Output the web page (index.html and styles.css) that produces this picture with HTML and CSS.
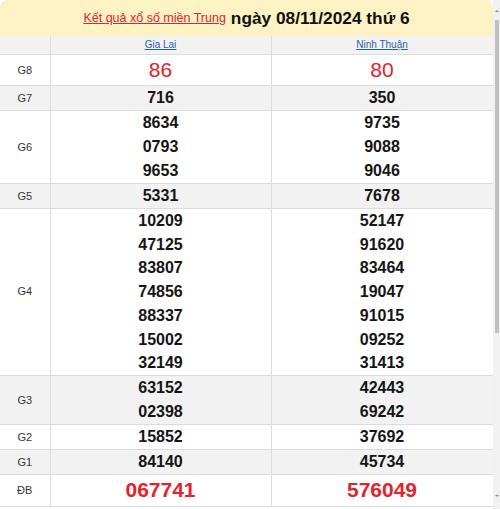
FILE: index.html
```html
<!DOCTYPE html>
<html lang="vi">
<head>
<meta charset="utf-8">
<title>Kết quả xổ số miền Trung</title>
<link rel="stylesheet" href="styles.css">
</head>
<body>
<div class="page">
  <div class="main">
    <div class="head">
      <a class="head-link" href="#">Kết quả xổ số miền Trung</a>
      <span class="head-date">ngày 08/11/2024 thứ 6</span>
    </div>
    <table class="kq">
      <colgroup><col class="c-label"><col class="c-prov"><col class="c-prov2"></colgroup>
      <tr class="prov gray">
        <td></td>
        <td><a href="#">Gia Lai</a></td>
        <td><a href="#">Ninh Thuận</a></td>
      </tr>
      <tr class="big">
        <td class="lb">G8</td>
        <td class="red">86</td>
        <td class="red">80</td>
      </tr>
      <tr class="gray">
        <td class="lb">G7</td>
        <td><div>716</div></td>
        <td><div>350</div></td>
      </tr>
      <tr>
        <td class="lb">G6</td>
        <td><div>8634</div><div>0793</div><div>9653</div></td>
        <td><div>9735</div><div>9088</div><div>9046</div></td>
      </tr>
      <tr class="gray">
        <td class="lb">G5</td>
        <td><div>5331</div></td>
        <td><div>7678</div></td>
      </tr>
      <tr class="g4">
        <td class="lb">G4</td>
        <td><div>10209</div><div>47125</div><div>83807</div><div>74856</div><div>88337</div><div>15002</div><div>32149</div></td>
        <td><div>52147</div><div>91620</div><div>83464</div><div>19047</div><div>91015</div><div>09252</div><div>31413</div></td>
      </tr>
      <tr class="gray">
        <td class="lb">G3</td>
        <td><div>63152</div><div>02398</div></td>
        <td><div>42443</div><div>69242</div></td>
      </tr>
      <tr>
        <td class="lb">G2</td>
        <td><div>15852</div></td>
        <td><div>37692</div></td>
      </tr>
      <tr class="gray">
        <td class="lb">G1</td>
        <td><div>84140</div></td>
        <td><div>45734</div></td>
      </tr>
      <tr class="big db">
        <td class="lb">ĐB</td>
        <td class="red">067741</td>
        <td class="red">576049</td>
      </tr>
    </table>
  </div>
  <div class="sbar">
    <span class="arrow up"></span>
    <div class="track"><div class="thumb"></div></div>
    <span class="arrow down"></span>
  </div>
</div>
</body>
</html>
```

FILE: styles.css
```css
html, body {
  margin: 0;
  padding: 0;
  background: #ffffff;
}
body {
  font-family: "Liberation Sans", Arial, sans-serif;
  color: #111;
}
.page {
  display: flex;
  width: 500px;
  height: 509px;
  overflow: hidden;
}
.main {
  width: 493px;
  flex: none;
}
.head {
  height: 36px;
  background: #fdf2c4;
  border-radius: 8px 8px 0 0;
  display: flex;
  align-items: center;
  justify-content: center;
  gap: 5px;
  padding-left: 0;
}
.head-link {
  color: #e0242b;
  font-size: 12.5px;
  text-decoration: underline;
}
.head-date {
  font-size: 17.3px;
  font-weight: bold;
  color: #111;
}
.kq {
  width: 493px;
  border-collapse: collapse;
  table-layout: fixed;
}
.c-label { width: 50px; }
.c-prov { width: 221px; }
.c-prov2 { width: 222px; }
.kq td {
  border: 1px solid #dcdcdc;
  text-align: center;
  padding: 0;
  font-size: 16px;
  font-weight: bold;
  line-height: 24px;
  color: #151515;
}
.kq td:first-child { border-left: none; }
.kq tr:first-child td { border-top: none; }
.kq .gray td { background: #f2f2f2; }
.kq .g4 td { line-height: 23.7px; }
.kq .prov td {
  height: 18px;
  line-height: 18px;
  font-size: 10px;
  font-weight: normal;
}
.kq .prov a {
  color: #1f5fb0;
  text-decoration: underline;
}
.kq td.lb {
  font-size: 11px;
  font-weight: normal;
  color: #333;
}
.kq .big td { height: 30px; }
.kq .db td { height: 31px; }
.kq td.red {
  color: #e2232b;
  font-size: 21px;
  font-weight: normal;
}
.kq .db td.red { font-weight: bold; }
.sbar {
  width: 7px;
  flex: none;
  background: #f1f1f1;
  display: flex;
  flex-direction: column;
  align-items: center;
}
.track {
  flex: 1;
  width: 100%;
  padding: 8px 1px 0 2px;
  box-sizing: border-box;
}
.thumb {
  height: 313px;
  background: #c1c1c1;
}
.arrow {
  width: 0;
  height: 0;
  border-left: 2px solid transparent;
  border-right: 2px solid transparent;
  margin: 10px 0 0 1px;
}
.arrow.up { border-bottom: 2px solid #888; }
.arrow.down { border-top: 2px solid #888; margin: 0 0 12px 1px; }
```
